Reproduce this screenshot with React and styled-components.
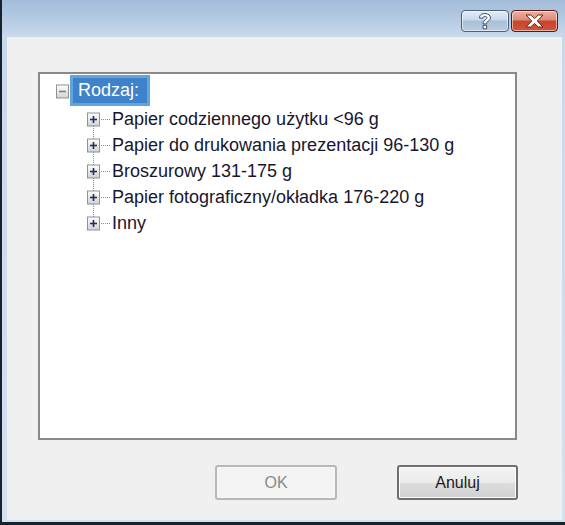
import React from "react";
import styled, { createGlobalStyle } from "styled-components";

const Global = createGlobalStyle`
  html, body { margin: 0; padding: 0; background: #0f1b24; }
  body { font-family: "Liberation Sans", Arial, sans-serif; }
`;

const Window = styled.div`
  width: 565px;
  height: 525px;
  box-sizing: border-box;
  display: flex;
  flex-direction: column;
  border-left: 2px solid #16232e;
  border-bottom: 3px solid #16232e;
  background: linear-gradient(#a3bcd9 0px, #b6cbe3 20px, #c9d9ec 37px, #d3e1f0 100%);
  padding: 0 3px 2px 5px;
  overflow: hidden;
`;

const TitleBar = styled.div`
  height: 37px;
  flex: none;
  display: flex;
  justify-content: flex-end;
  align-items: flex-start;
  padding: 10px 4px 0 0;
  box-sizing: border-box;
  gap: 2px;
`;

const CaptionButton = styled.div`
  width: ${(p) => p.w}px;
  height: 22px;
  box-sizing: border-box;
  border: 1px solid ${(p) => (p.red ? "#5a1b12" : "#4d6179")};
  border-radius: 4px;
  display: flex;
  align-items: center;
  justify-content: center;
  background: ${(p) =>
    p.red
      ? "linear-gradient(#eab2a6 0%, #de8a77 45%, #c8432a 50%, #d2553a 100%)"
      : "linear-gradient(#e2ecf6 0%, #c9d9ea 45%, #a7bfd8 50%, #b9cde2 100%)"};
  box-shadow: inset 0 0 0 1px rgba(255, 255, 255, 0.55);
`;

const Client = styled.div`
  flex: 1;
  background: #f0f0f0;
  display: flex;
  flex-direction: column;
  padding: 35px 0 0 31px;
  box-sizing: border-box;
`;

const TreeBox = styled.div`
  width: 479px;
  height: 368px;
  box-sizing: border-box;
  border: 2px solid #86898e;
  background: #ffffff;
  padding-top: 1px;
`;

const Row = styled.div`
  display: flex;
  align-items: center;
  height: ${(p) => p.h}px;
  padding-left: ${(p) => p.indent}px;
  font-size: 18px;
  color: #18162e;
  white-space: nowrap;
`;

const Selected = styled.span`
  height: 31px;
  box-sizing: border-box;
  border: 3px solid #62a5de;
  background: #3e82c9;
  color: #ffffff;
  padding: 0 8px 0 5px;
  display: flex;
  align-items: center;
`;

const Label = styled.span`
  margin-left: 1px;
`;

const ButtonRow = styled.div`
  display: flex;
  gap: 60px;
  margin: 25px 0 0 177px;
`;

const Button = styled.div`
  width: ${(p) => p.w}px;
  height: 35px;
  box-sizing: border-box;
  border-radius: 3px;
  display: flex;
  align-items: center;
  justify-content: center;
  font-size: 16px;
  border: 2px solid ${(p) => (p.disabled ? "#b6b9bc" : "#707070")};
  color: ${(p) => (p.disabled ? "#8a8a8a" : "#1a1a1a")};
  background: ${(p) =>
    p.disabled
      ? "#f4f4f4"
      : "linear-gradient(#f3f3f3 0%, #ebebeb 50%, #dddddd 51%, #d0d0d0 100%)"};
  box-shadow: inset 0 0 0 1px ${(p) => (p.disabled ? "#f7f7f7" : "#fbfbfb")};
`;

function Expander({ minus, up, down }) {
  const w = minus ? 14 : 24;
  return (
    <svg width={w} height="26" viewBox={`0 0 ${w} 26`}>
      <defs>
        <linearGradient id="eg" x1="0" y1="0" x2="0" y2="1">
          <stop offset="0" stopColor="#ffffff" />
          <stop offset="1" stopColor="#d2d2d6" />
        </linearGradient>
      </defs>
      {up && <line x1="6.5" y1="0" x2="6.5" y2="7" stroke="#8a8a8a" strokeDasharray="1 1" />}
      {down && <line x1="6.5" y1="20" x2="6.5" y2="26" stroke="#8a8a8a" strokeDasharray="1 1" />}
      {!minus && (
        <line x1="14" y1="13.5" x2="23" y2="13.5" stroke="#8a8a8a" strokeDasharray="1 1" />
      )}
      <rect x="0.5" y="7" width="12" height="13" fill="url(#eg)" stroke="#8f9297" />
      <line x1="3" y1="13.5" x2="10" y2="13.5" stroke={minus ? "#7b7e84" : "#1e2f5e"} strokeWidth="1.6" />
      {!minus && <line x1="6.5" y1="10" x2="6.5" y2="17" stroke="#1e2f5e" strokeWidth="1.6" />}
    </svg>
  );
}

const items = [
  "Papier codziennego użytku <96 g",
  "Papier do drukowania prezentacji 96-130 g",
  "Broszurowy 131-175 g",
  "Papier fotograficzny/okładka 176-220 g",
  "Inny",
];

export default function App() {
  return (
    <>
      <Global />
      <Window>
        <TitleBar>
          <CaptionButton w={48}>
            <svg width="14" height="17" viewBox="0 0 14 17">
              <path
                d="M1.5 5 C1.5 1.5 4.2 0.6 7 0.6 C10.2 0.6 12.5 2.4 12.5 4.8 C12.5 7 10.6 7.9 9.2 8.9 C8.5 9.4 8.6 10.2 8.6 10.9 L5.1 10.9 C5.1 9.3 5.4 8.1 7 7 C8.3 6.1 8.9 5.6 8.9 4.8 C8.9 3.8 8.1 3.4 7 3.4 C5.7 3.4 5 4.1 5 5.2 Z M5.1 12.3 L8.6 12.3 L8.6 15.8 L5.1 15.8 Z"
                fill="#ffffff"
                stroke="#3d4f66"
                strokeWidth="1"
              />
            </svg>
          </CaptionButton>
          <CaptionButton w={47} red>
            <svg width="19" height="14" viewBox="0 0 19 14">
              <path
                d="M1 1 L5.8 1 L9.5 4.6 L13.2 1 L18 1 L12.3 7 L18 13 L13.2 13 L9.5 9.4 L5.8 13 L1 13 L6.7 7 Z"
                fill="#ffffff"
                stroke="#6b1f14"
                strokeWidth="1"
              />
            </svg>
          </CaptionButton>
        </TitleBar>
        <Client>
          <TreeBox>
            <Row h={31} indent={16}>
              <Expander minus />
              <Selected>Rodzaj:</Selected>
            </Row>
            {items.map((t, i) => (
              <Row key={t} h={26} indent={47}>
                <Expander up={i > 0} down={i < items.length - 1} />
                <Label>{t}</Label>
              </Row>
            ))}
          </TreeBox>
          <ButtonRow>
            <Button w={122} disabled>OK</Button>
            <Button w={121}>Anuluj</Button>
          </ButtonRow>
        </Client>
      </Window>
    </>
  );
}
